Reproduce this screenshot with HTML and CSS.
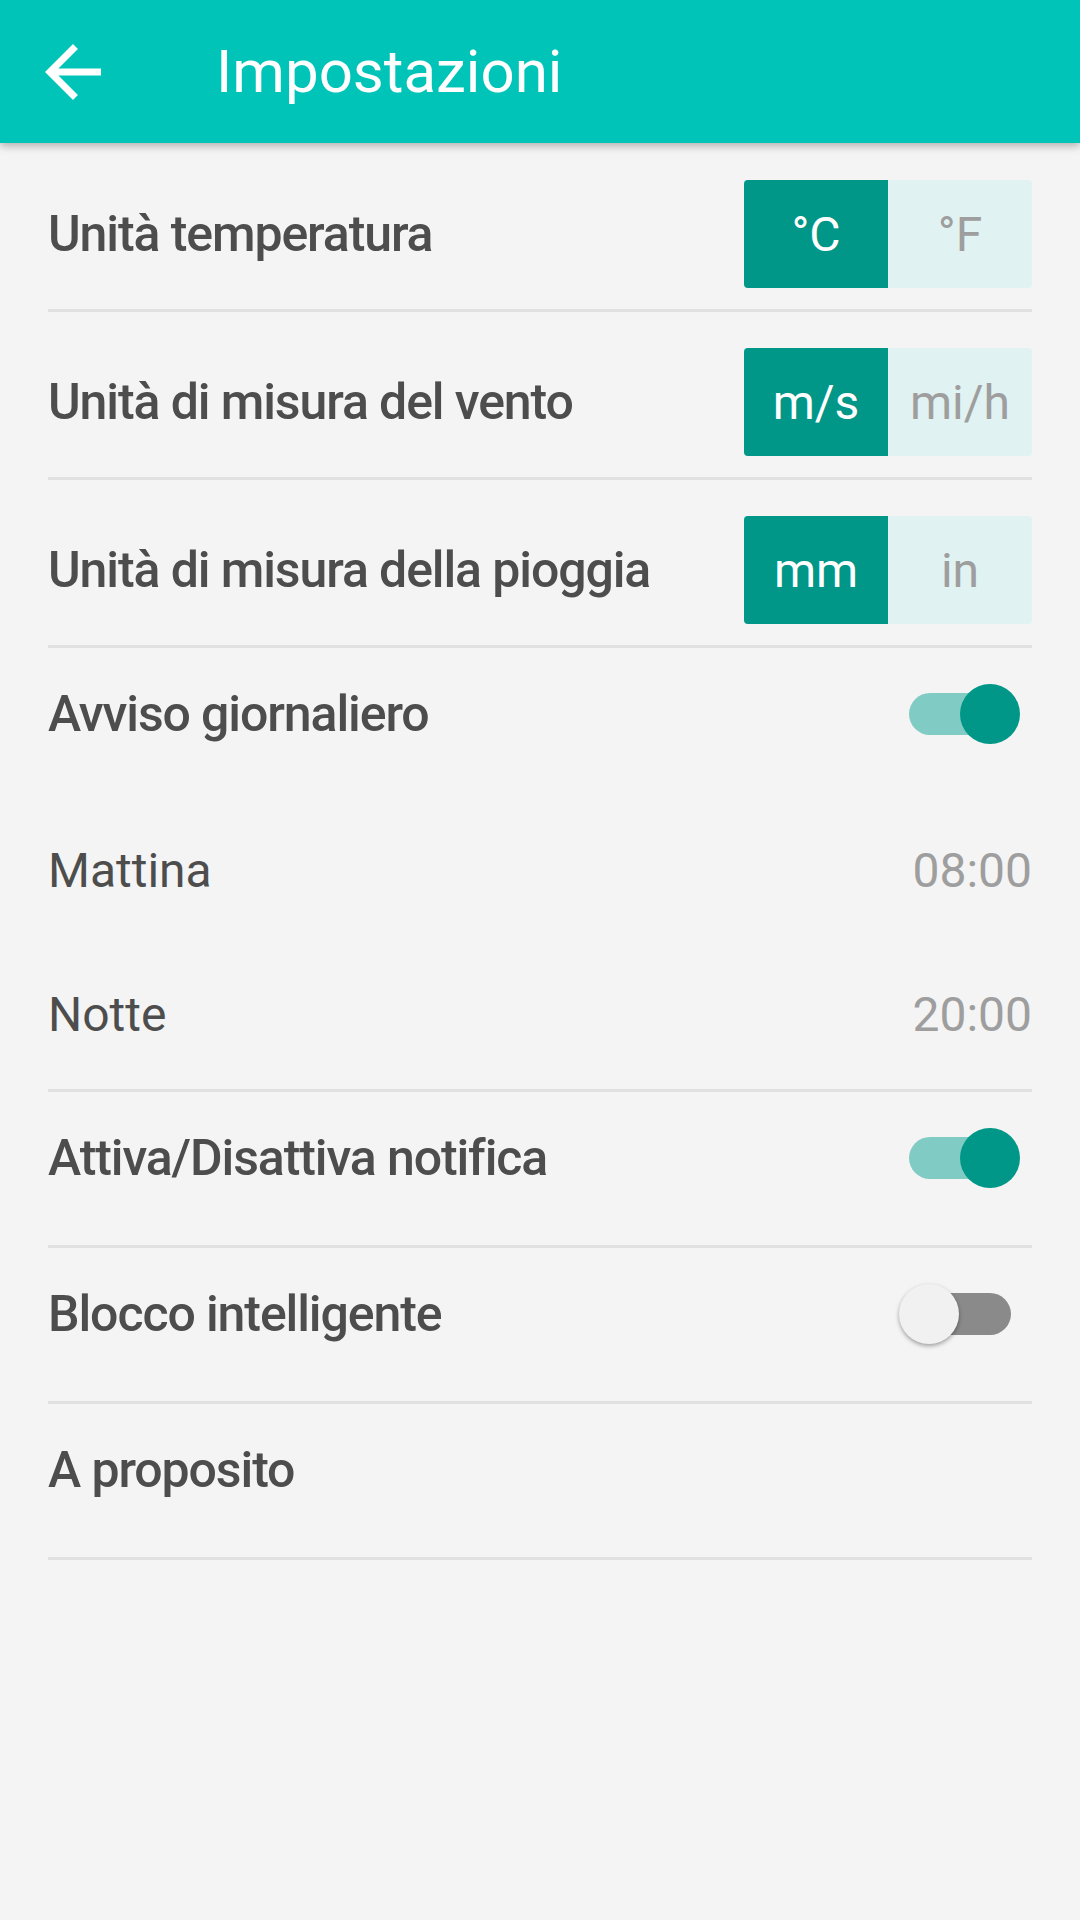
FILE: index.html
```html
<!DOCTYPE html>
<html lang="it">
<head>
    <meta charset="UTF-8">
    <meta name="viewport" content="width=device-width, initial-scale=1.0">
    <title>Impostazioni</title>
    <link rel="stylesheet" href="styles.css">
</head>
<body>
    <header class="toolbar">
        <svg class="back" viewBox="4 4 16 16" aria-hidden="true">
            <path d="M20 11H7.83l5.59-5.59L12 4l-8 8 8 8 1.41-1.41L7.83 13H20v-2z" fill="#fff"/>
        </svg>
        <h1 class="title">Impostazioni</h1>
    </header>

    <main class="settings">
        <div class="item unit-row divided">
            <span class="label">Unità temperatura</span>
            <div class="segmented">
                <span class="seg active">°C</span>
                <span class="seg">°F</span>
            </div>
        </div>

        <div class="item unit-row divided">
            <span class="label">Unità di misura del vento</span>
            <div class="segmented">
                <span class="seg active">m/s</span>
                <span class="seg">mi/h</span>
            </div>
        </div>

        <div class="item unit-row divided">
            <span class="label">Unità di misura della pioggia</span>
            <div class="segmented">
                <span class="seg active">mm</span>
                <span class="seg">in</span>
            </div>
        </div>

        <div class="group divided">
            <div class="item switch-row first-in-group">
                <span class="label">Avviso giornaliero</span>
                <div class="switch">
                    <span class="track"></span>
                    <span class="thumb"></span>
                </div>
            </div>
            <div class="item time-row">
                <span class="sub">Mattina</span>
                <span class="time">08:00</span>
            </div>
            <div class="item time-row">
                <span class="sub">Notte</span>
                <span class="time">20:00</span>
            </div>
        </div>

        <div class="item switch-row divided">
            <span class="label">Attiva/Disattiva notifica</span>
            <div class="switch">
                <span class="track"></span>
                <span class="thumb"></span>
            </div>
        </div>

        <div class="item switch-row divided">
            <span class="label">Blocco intelligente</span>
            <div class="switch off">
                <span class="track"></span>
                <span class="thumb"></span>
            </div>
        </div>

        <div class="item switch-row divided">
            <span class="label">A proposito</span>
        </div>
    </main>
</body>
</html>
```

FILE: styles.css
```css
body {
    margin: 0;
    background: #f4f4f4;
    font-family: Roboto, "Noto Sans", sans-serif;
}

.toolbar {
    position: relative;
    z-index: 1;
    height: 143px;
    background: #00c4b8;
    display: flex;
    align-items: center;
    padding-left: 45px;
    box-shadow: 0 3px 8px rgba(0,0,0,0.28);
}

.back {
    width: 56px;
    height: 56px;
}

.title {
    margin: 0 0 0 115px;
    font-size: 60px;
    font-weight: 400;
    color: #fff;
}

.settings {
    padding: 0 48px;
}

.item {
    display: flex;
    align-items: center;
    justify-content: space-between;
}

.divided {
    border-bottom: 3px solid #e1e1e1;
}

.label {
    font-size: 50px;
    font-weight: 500;
    letter-spacing: -1.1px;
    line-height: 60px;
    color: #4d4d4d;
}

/* righe con selettore unità */
.unit-row {
    padding: 36px 0 21px;
}

.unit-row:first-child {
    padding-top: 37px;
}

.segmented {
    display: flex;
    border-radius: 4px;
    overflow: hidden;
}

.seg {
    width: 144px;
    height: 108px;
    display: flex;
    align-items: center;
    justify-content: center;
    font-size: 48px;
    background: #e0f2f1;
    color: #9e9e9e;
}

.seg.active {
    background: #009688;
    color: #fff;
}

/* righe con interruttore */
.switch-row {
    height: 132px;
    padding-bottom: 21px;
}

.switch-row.first-in-group {
    padding-bottom: 19px;
}

.group {
    padding-bottom: 2px;
}

.time-row {
    height: 144px;
}

.sub, .time {
    font-size: 48px;
    line-height: 60px;
    color: #4d4d4d;
}

.time {
    color: #9e9e9e;
}

.switch {
    position: relative;
    width: 102px;
    height: 60px;
    margin-right: 21px;
}

.switch .track {
    position: absolute;
    left: 0;
    top: 9px;
    width: 102px;
    height: 42px;
    border-radius: 21px;
    background: #80cbc4;
}

.switch .thumb {
    position: absolute;
    top: 0;
    left: 51px;
    width: 60px;
    height: 60px;
    border-radius: 50%;
    background: #009688;
}

.switch.off .track {
    background: #8a8a8a;
}

.switch.off .thumb {
    left: -10px;
    background: #f1f1f1;
    box-shadow: 0 2px 4px rgba(0,0,0,0.35);
}
```
